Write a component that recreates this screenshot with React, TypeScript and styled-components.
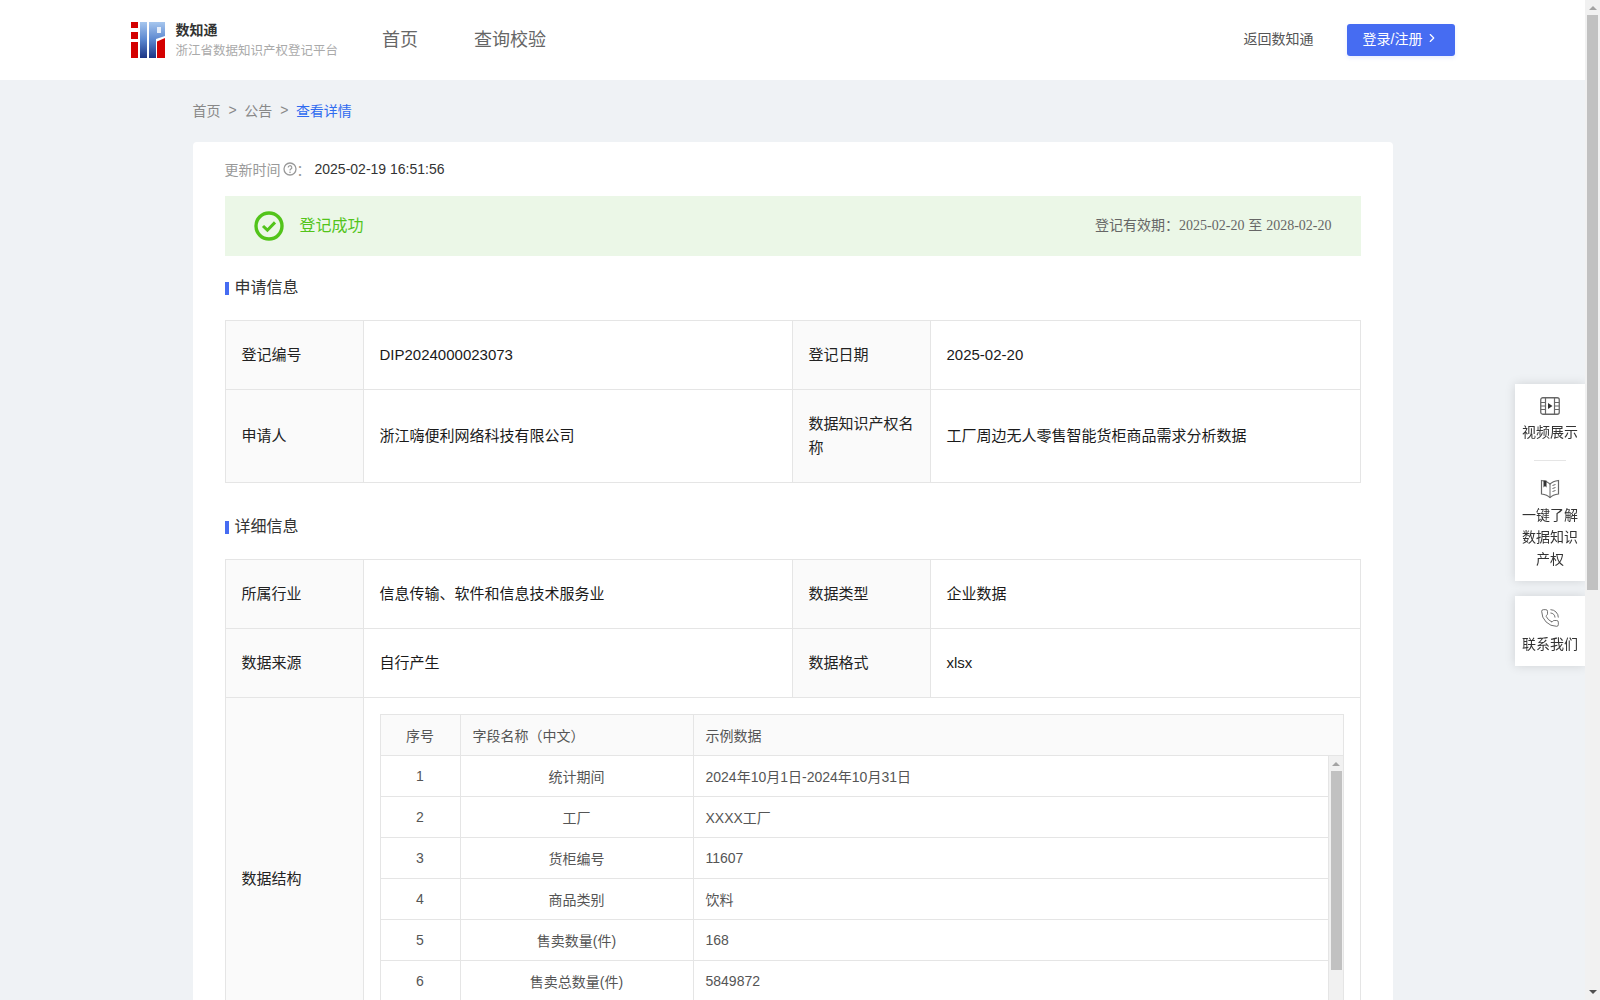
import styled, { createGlobalStyle } from 'styled-components';
import { ChevronRight, PhoneCall } from 'lucide-react';

const GlobalStyle = createGlobalStyle`
  html, body { margin: 0; padding: 0; }
  body {
    background: #eff2f5;
    color: #333;
    font-family: "Liberation Sans", "Noto Sans CJK SC", sans-serif;
    font-size: 14px;
  }
  * { box-sizing: border-box; }
`;

const Page = styled.div`
  width: 1585px;
  padding-bottom: 40px;
`;

const Header = styled.header`
  height: 80px;
  background: #fff;
`;

const HeaderInner = styled.div`
  display: flex;
  align-items: center;
  width: 1324px;
  height: 100%;
  margin: 0 auto;
`;

const Brand = styled.div`
  display: flex;
  align-items: center;
  column-gap: 11px;
  margin-right: 44px;
`;

const BrandText = styled.div`
  display: flex;
  flex-direction: column;
  row-gap: 3px;
`;

const BrandName = styled.span`
  font-size: 14px;
  line-height: 18px;
  font-weight: 700;
  color: #333;
`;

const BrandSub = styled.span`
  font-size: 12.5px;
  line-height: 18px;
  color: #aaa;
  white-space: nowrap;
`;

const Nav = styled.nav`
  display: flex;
  column-gap: 56px;
  flex: 1;
  padding-bottom: 4px;
`;

const NavLink = styled.a`
  font-size: 18px;
  color: #666;
`;

const BackLink = styled.a`
  margin-right: 33px;
  padding-bottom: 4px;
  font-size: 14px;
  color: #555;
`;

const LoginButton = styled.button`
  display: flex;
  align-items: center;
  column-gap: 3px;
  width: 108px;
  height: 32px;
  padding: 0 0 4px 16px;
  border: 0;
  border-radius: 3px;
  background: #466cf2;
  box-shadow: 0 2px 4px rgba(70, 108, 242, 0.12);
  color: #fff;
  font: inherit;
`;

const Main = styled.main`
  width: 1200px;
  margin: 0 auto;
`;

const Breadcrumb = styled.div`
  display: flex;
  align-items: center;
  height: 22px;
  margin: 19px 0 21px;
  color: #888;
`;

const Crumb = styled.span<{ $current?: boolean }>`
  color: ${({ $current }) => ($current ? '#2f6bf0' : '#888')};
`;

const CrumbSep = styled.span`
  margin: 0 7.5px 0 8px;
  color: #888;
`;

const Card = styled.section`
  padding: 16px 32px 32px;
  border-radius: 4px;
  background: #fff;
`;

const UpdateRow = styled.div`
  display: flex;
  align-items: center;
  height: 22px;
  color: #999;
`;

const UpdateTime = styled.span`
  margin-left: 4px;
  color: #333;
`;

const Banner = styled.div`
  display: flex;
  align-items: center;
  height: 60px;
  margin-top: 16px;
  padding: 0 29px;
  background: #ebf7e7;
`;

const BannerTitle = styled.span`
  flex: 1;
  margin-left: 16px;
  padding-bottom: 4px;
  font-size: 16px;
  color: #52c41a;
`;

const Validity = styled.span`
  padding-bottom: 4px;
  color: #666;
`;

const ValidityDate = styled.span`
  font-family: "Liberation Serif", "Noto Sans CJK SC", serif;
`;

const SectionTitle = styled.h2<{ $first?: boolean }>`
  display: flex;
  align-items: center;
  height: 24px;
  margin: ${({ $first }) => ($first ? '18px' : '30px')} 0 22px;
  font-size: 16px;
  font-weight: 400;
  color: #333;

  &::before {
    content: '';
    width: 4px;
    height: 13px;
    margin: 4px 6px 0 0;
    background: #466cf2;
  }
`;

const InfoTable = styled.table`
  width: 1135px;
  border-collapse: collapse;
  table-layout: fixed;
`;

const LabelCell = styled.td<{ $tall?: boolean }>`
  height: ${({ $tall }) => ($tall ? '93px' : '69px')};
  padding: 0 16px;
  border: 1px solid #e5e5e5;
  background: #fafafa;
  font-size: 15px;
  line-height: 24px;
  color: #222;
`;

const ValueCell = styled.td`
  padding: 0 16px;
  border: 1px solid #e5e5e5;
  font-size: 15px;
  line-height: 24px;
  color: #1a1a1a;
`;

const NestedCell = styled.td`
  padding: 16px;
  border: 1px solid #e5e5e5;
`;

const FieldTable = styled.div`
  border: 1px solid #e5e5e5;
`;

const FieldRow = styled.div<{ $head?: boolean }>`
  display: grid;
  grid-template-columns: 80px 233px 1fr;
  height: 41px;
  border-bottom: 1px solid #e5e5e5;
  background: ${({ $head }) => ($head ? '#fafafa' : '#fff')};
  color: #555;
`;

const FieldCell = styled.div<{ $center?: boolean }>`
  display: flex;
  align-items: center;
  justify-content: ${({ $center }) => ($center ? 'center' : 'flex-start')};
  padding: 0 12px 1px;
  border-right: 1px solid #e5e5e5;

  &:last-child {
    border-right: 0;
  }
`;

const FieldBody = styled.div`
  position: relative;
  height: 287px;
  padding-right: 15px;
  overflow: hidden;
`;

const BodyScrollbar = styled.div`
  position: absolute;
  top: 0;
  right: 0;
  bottom: 0;
  width: 15px;
  border-left: 1px solid #e5e5e5;
  background: #f1f1f1;
`;

const ScrollArrow = styled.div`
  width: 0;
  height: 0;
  margin: 0 auto;
  border-left: 4px solid transparent;
  border-right: 4px solid transparent;
  border-bottom: 4px solid #a3a3a3;
`;

const BodyArrowSlot = styled.div`
  padding-top: 6px;
  height: 15px;
`;

const BodyThumb = styled.div`
  width: 11px;
  height: 199px;
  margin-left: 2px;
  background: #c1c1c1;
`;

const PageScrollbar = styled.div`
  position: fixed;
  top: 0;
  right: 0;
  bottom: 0;
  z-index: 5;
  display: flex;
  flex-direction: column;
  width: 15px;
  background: #f1f1f1;
`;

const PageArrowSlot = styled.div`
  height: 15px;
  padding-top: 6px;
`;

const PageThumb = styled.div`
  width: 11px;
  height: 575px;
  margin-left: 2px;
  background: #c1c1c1;
`;

const PageDownSlot = styled.div`
  height: 15px;
  margin-top: auto;
  padding-top: 5px;
`;

const DownArrow = styled(ScrollArrow)`
  border-bottom: 0;
  border-top: 4px solid #505050;
`;

const SideDock = styled.aside`
  position: fixed;
  top: 384px;
  right: 15px;
  z-index: 4;
  display: flex;
  flex-direction: column;
  row-gap: 15px;
  width: 70px;
`;

const DockCard = styled.div<{ $top: number }>`
  display: flex;
  flex-direction: column;
  align-items: center;
  padding: ${({ $top }) => $top}px 0 11px;
  background: #fff;
  box-shadow: 0 0 10px rgba(0, 0, 0, 0.13);
`;

const DockLabel = styled.div<{ $wide?: boolean }>`
  margin-top: ${({ $wide }) => ($wide ? '6px' : '5px')};
  font-size: 14px;
  line-height: 22px;
  text-align: center;
  color: #333;
`;

const DockDivider = styled.div`
  width: 32px;
  height: 1px;
  margin: 17px 0 18px;
  background: #e5e5e5;
`;

const fields = [
  { no: 1, name: '统计期间', sample: '2024年10月1日-2024年10月31日' },
  { no: 2, name: '工厂', sample: 'XXXX工厂' },
  { no: 3, name: '货柜编号', sample: '11607' },
  { no: 4, name: '商品类别', sample: '饮料' },
  { no: 5, name: '售卖数量(件)', sample: '168' },
  { no: 6, name: '售卖总数量(件)', sample: '5849872' },
];

const InfoCols = () => (
  <colgroup>
    <col width='138' />
    <col width='429' />
    <col width='138' />
    <col width='430' />
  </colgroup>
);

const LogoMark = () => (
  <svg width='34' height='36' viewBox='0 0 34 36'>
    <defs>
      <linearGradient id='logoBlue' x1='0' y1='0' x2='0' y2='1'>
        <stop offset='0' stopColor='#a6c6ee' />
        <stop offset='0.5' stopColor='#5a86cf' />
        <stop offset='1' stopColor='#1c3585' />
      </linearGradient>
    </defs>
    <path d='M0 0h7v6H0zM0 10h7v7H0zM0 20h7v16H0z' fill='#d40000' />
    <rect x='9' y='0' width='7' height='36' fill='url(#logoBlue)' />
    <path d='M18 0h16v14l-9 3v19h-7z' fill='url(#logoBlue)' />
    <path d='M26 5h4v6h-4z' fill='#e6eefa' />
    <path d='M26 19.5l8-3.5v20h-8z' fill='#d40000' />
  </svg>
);

const HelpIcon = () => (
  <svg width='14' height='14' viewBox='0 0 14 14' style={{ marginLeft: 2 }}>
    <circle cx='7' cy='7' r='6' fill='none' stroke='#999' strokeWidth='1.3' />
    <path d='M5.2 5.6a1.8 1.8 0 1 1 2.7 1.5c-.6.4-.9.7-.9 1.4' fill='none' stroke='#999' strokeWidth='1.2' />
    <circle cx='7' cy='10.3' r='0.8' fill='#999' />
  </svg>
);

const SuccessIcon = () => (
  <svg width='30' height='30' viewBox='0 0 30 30'>
    <circle cx='15' cy='15' r='13' fill='none' stroke='#52c41a' strokeWidth='3.4' />
    <path d='M9 15l4.4 4.2L21 11.4' fill='none' stroke='#52c41a' strokeWidth='3' />
  </svg>
);

const VideoIcon = () => (
  <svg width='20' height='18' viewBox='0 0 20 18'>
    <rect x='0.75' y='0.75' width='18.5' height='16.5' rx='2' fill='none' stroke='#666' strokeWidth='1.3' />
    <path d='M5.5 1v16M14.5 1v16M1 5.5h4.5M1 9h4.5M1 12.5h4.5M14.5 5.5H19M14.5 9H19M14.5 12.5H19' stroke='#666' strokeWidth='1.2' />
    <path d='M8 6l4.5 3L8 12z' fill='#333' />
  </svg>
);

const BookIcon = () => (
  <svg width='20' height='20' viewBox='0 0 20 20'>
    <path d='M10 5C8 3 5 2 1.5 1.5V15C5 15.5 8 16.5 10 18.5 12 16.5 15 15.5 18.5 15V1.5C15 2 12 3 10 5Z' fill='none' stroke='#666' strokeWidth='1.2' />
    <path d='M10 5v13.5' stroke='#666' />
    <path d='M3.5 1.5h3v7l-1.5-1.5-1.5 1.5z' fill='#333' />
    <path d='M12.5 6.5l3-1M12.5 9.5l3-1M12.5 12.5l3-1' stroke='#666' />
  </svg>
);

export default function App() {
  return (
    <Page>
      <GlobalStyle />
      <Header>
        <HeaderInner>
          <Brand>
            <LogoMark />
            <BrandText>
              <BrandName>数知通</BrandName>
              <BrandSub>浙江省数据知识产权登记平台</BrandSub>
            </BrandText>
          </Brand>
          <Nav>
            <NavLink>首页</NavLink>
            <NavLink>查询校验</NavLink>
          </Nav>
          <BackLink>返回数知通</BackLink>
          <LoginButton>
            登录/注册
            <ChevronRight size={14} />
          </LoginButton>
        </HeaderInner>
      </Header>

      <Main>
        <Breadcrumb>
          <Crumb>首页</Crumb>
          <CrumbSep>&gt;</CrumbSep>
          <Crumb>公告</Crumb>
          <CrumbSep>&gt;</CrumbSep>
          <Crumb $current>查看详情</Crumb>
        </Breadcrumb>

        <Card>
          <UpdateRow>
            更新时间
            <HelpIcon />
            ：
            <UpdateTime>2025-02-19 16:51:56</UpdateTime>
          </UpdateRow>

          <Banner>
            <SuccessIcon />
            <BannerTitle>登记成功</BannerTitle>
            <Validity>
              登记有效期：<ValidityDate>2025-02-20</ValidityDate> 至 <ValidityDate>2028-02-20</ValidityDate>
            </Validity>
          </Banner>

          <SectionTitle $first>申请信息</SectionTitle>
          <InfoTable>
            <InfoCols />
            <tbody>
              <tr>
                <LabelCell>登记编号</LabelCell>
                <ValueCell>DIP2024000023073</ValueCell>
                <LabelCell>登记日期</LabelCell>
                <ValueCell>2025-02-20</ValueCell>
              </tr>
              <tr>
                <LabelCell $tall>申请人</LabelCell>
                <ValueCell>浙江嗨便利网络科技有限公司</ValueCell>
                <LabelCell $tall>数据知识产权名称</LabelCell>
                <ValueCell>工厂周边无人零售智能货柜商品需求分析数据</ValueCell>
              </tr>
            </tbody>
          </InfoTable>

          <SectionTitle>详细信息</SectionTitle>
          <InfoTable>
            <InfoCols />
            <tbody>
              <tr>
                <LabelCell>所属行业</LabelCell>
                <ValueCell>信息传输、软件和信息技术服务业</ValueCell>
                <LabelCell>数据类型</LabelCell>
                <ValueCell>企业数据</ValueCell>
              </tr>
              <tr>
                <LabelCell>数据来源</LabelCell>
                <ValueCell>自行产生</ValueCell>
                <LabelCell>数据格式</LabelCell>
                <ValueCell>xlsx</ValueCell>
              </tr>
              <tr>
                <LabelCell>数据结构</LabelCell>
                <NestedCell colSpan={3}>
                  <FieldTable>
                    <FieldRow $head>
                      <FieldCell $center>序号</FieldCell>
                      <FieldCell>字段名称（中文）</FieldCell>
                      <FieldCell>示例数据</FieldCell>
                    </FieldRow>
                    <FieldBody>
                      {fields.map((field) => (
                        <FieldRow key={field.no}>
                          <FieldCell $center>{field.no}</FieldCell>
                          <FieldCell $center>{field.name}</FieldCell>
                          <FieldCell>{field.sample}</FieldCell>
                        </FieldRow>
                      ))}
                      <BodyScrollbar>
                        <BodyArrowSlot>
                          <ScrollArrow />
                        </BodyArrowSlot>
                        <BodyThumb />
                      </BodyScrollbar>
                    </FieldBody>
                  </FieldTable>
                </NestedCell>
              </tr>
            </tbody>
          </InfoTable>
        </Card>
      </Main>

      <SideDock>
        <DockCard $top={13}>
          <VideoIcon />
          <DockLabel $wide>视频展示</DockLabel>
          <DockDivider />
          <BookIcon />
          <DockLabel>
            一键了解
            <br />
            数据知识
            <br />
            产权
          </DockLabel>
        </DockCard>
        <DockCard $top={12}>
          <PhoneCall size={20} strokeWidth={1} color='#555' />
          <DockLabel>联系我们</DockLabel>
        </DockCard>
      </SideDock>

      <PageScrollbar>
        <PageArrowSlot>
          <ScrollArrow />
        </PageArrowSlot>
        <PageThumb />
        <PageDownSlot>
          <DownArrow />
        </PageDownSlot>
      </PageScrollbar>
    </Page>
  );
}
